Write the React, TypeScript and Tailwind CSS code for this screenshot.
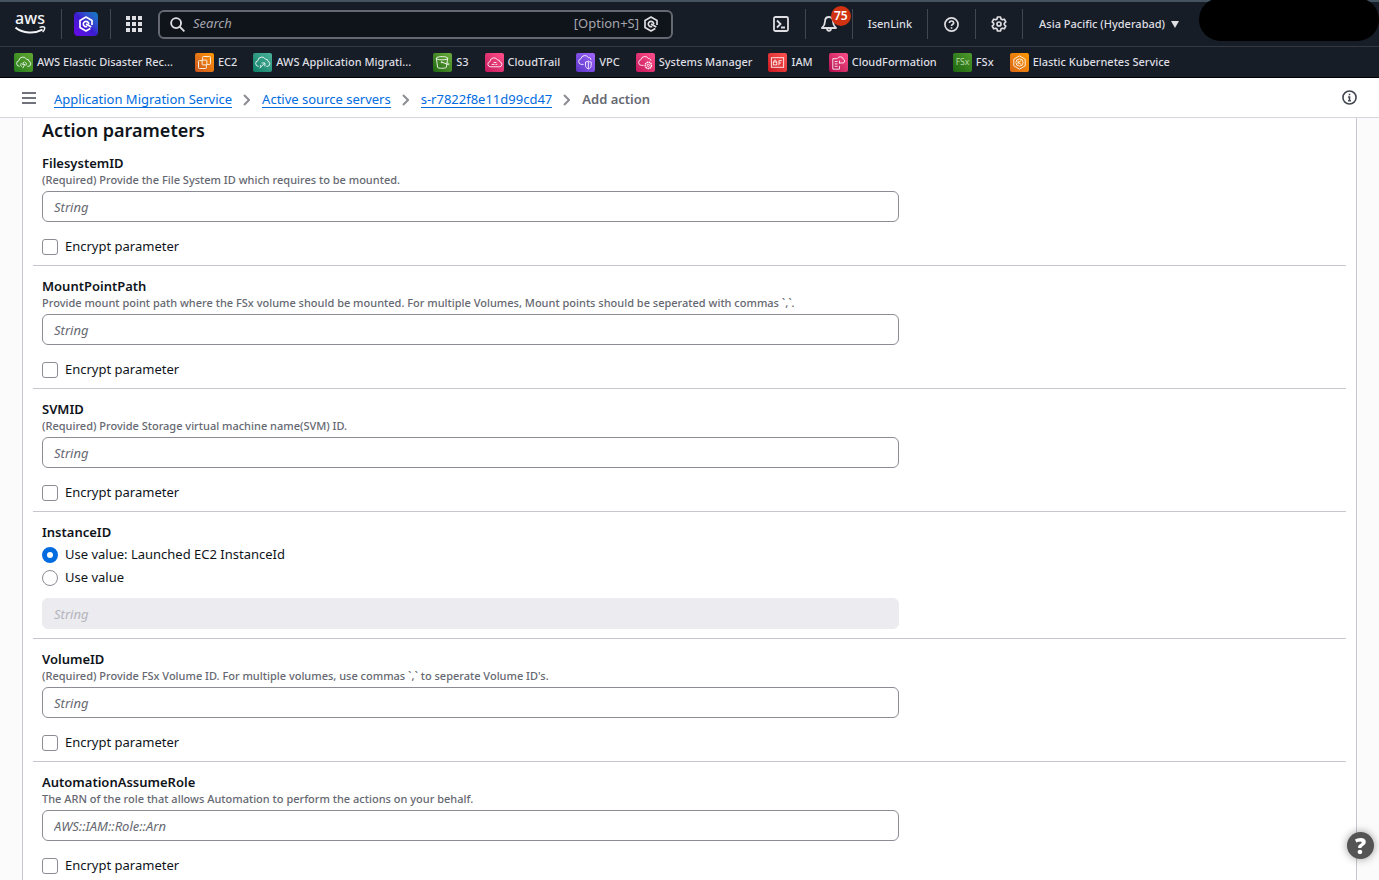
import { useState, type ReactNode } from 'react'

interface Favorite {
  label: string
  color: string
  icon: ReactNode
  shortened?: boolean
}

interface Parameter {
  name: string
  description: string
  placeholder: string
}

const cloud = 'M6 14H5.500a3 3 0 0 1-.4-5.900A4.300 4.300 0 0 1 13.200 6.600a2.300 2.300 0 0 1 2.600 2.200A2.700 2.700 0 0 1 15.500 14H14'

const favorites: Favorite[] = [
  {
    label: 'AWS Elastic Disaster Rec...',
    shortened: true,
    color: 'bg-linear-to-tr from-[#1f7a1a] to-[#62a832]',
    icon: (
      <>
        <path d={cloud} />
        <path d="M10.800 9 9 12h2.400l-2.200 4M8.200 10.300a2.600 2.600 0 0 0-.2 4M12 9.700a2.600 2.600 0 0 1 .4 3.600" />
      </>
    ),
  },
  {
    label: 'EC2',
    color: 'bg-linear-to-tr from-[#c8511b] to-[#ff9900]',
    icon: (
      <>
        <path d="M8 7.500V4.500a.8.8 0 0 1 .8-.8h6.700a.8.8 0 0 1 .8.8v6.700a.8.8 0 0 1-.8.8H12.500" />
        <path d="M7.500 8H4.500a.8.8 0 0 0-.8.8v6.700a.8.8 0 0 0 .8.8h6.700a.8.8 0 0 0 .8-.8V12.500" />
        <rect x="7.500" y="7.500" width="5" height="5" rx=".5" />
      </>
    ),
  },
  {
    label: 'AWS Application Migrati...',
    shortened: true,
    color: 'bg-linear-to-tr from-[#067f68] to-[#4ab29a]',
    icon: (
      <>
        <path d={cloud} />
        <path d="m7 16 5-5M9 10.500h3.500V14M8 12.500v2" />
      </>
    ),
  },
  {
    label: 'S3',
    color: 'bg-linear-to-tr from-[#1b660f] to-[#6cae3e]',
    icon: (
      <>
        <ellipse cx="9.500" cy="5.500" rx="6" ry="1.700" />
        <path d="m3.500 5.500 1.400 9.700c.6 1.200 8.200 1.200 9.100 0l1.500-9.700M9.500 9.800l6.700 2.400c1 .3.7-1-1-1.900" />
        <circle cx="9.200" cy="9.700" r=".6" />
      </>
    ),
  },
  {
    label: 'CloudTrail',
    color: 'bg-linear-to-tr from-[#c4145c] to-[#ff4f8b]',
    icon: (
      <path d="M5.500 14.500h10a2.600 2.600 0 0 0 .3-5.100 2.200 2.200 0 0 0-2.500-2A4.300 4.300 0 0 0 5.200 9a2.800 2.800 0 0 0 .3 5.500ZM7 12h3M11 12h2M9 10h3" />
    ),
  },
  {
    label: 'VPC',
    color: 'bg-linear-to-tr from-[#5b33c4] to-[#a166ff]',
    icon: (
      <>
        <path d="M8 12H5.500a3 3 0 0 1-.4-5.900A4.300 4.300 0 0 1 13 4.800a2.300 2.300 0 0 1 2.700 2.400" />
        <path d="M10 9.500c1.500 0 2-.5 3-1 1 .5 1.500 1 3 1v3.500c0 2-1.200 3-3 3.800-1.800-.8-3-1.800-3-3.800ZM13 9v7.500" />
      </>
    ),
  },
  {
    label: 'Systems Manager',
    color: 'bg-linear-to-tr from-[#c4145c] to-[#ff4f8b]',
    icon: (
      <>
        <path d="M8 13H5.500a3 3 0 0 1-.4-5.900A4.300 4.300 0 0 1 13 5.800a2.300 2.300 0 0 1 2.700 2.400" />
        <circle cx="13" cy="13" r="3.300" strokeDasharray="1.600 .6" strokeWidth="1.500" />
        <circle cx="13" cy="13" r="1.200" />
      </>
    ),
  },
  {
    label: 'IAM',
    color: 'bg-linear-to-tr from-[#c7131f] to-[#ff5252]',
    icon: (
      <>
        <rect x="3.500" y="5" width="13" height="10" />
        <rect x="5.500" y="9.500" width="3.800" height="3" />
        <path d="M6.300 9.500v-1a1.100 1.100 0 0 1 2.200 0v1M11.500 8h3M11.500 10.500h2.200M11.500 8v5" />
      </>
    ),
  },
  {
    label: 'CloudFormation',
    color: 'bg-linear-to-tr from-[#b0084d] to-[#ff4f8b]',
    icon: (
      <>
        <path d="M8.500 6H4v11h7v-3.500M6 9h3M6 11.500h3M6 14h3" />
        <path d="M10.500 10.500h4.200a2.100 2.100 0 0 0 .3-4.100 3.200 3.200 0 0 0-6-.6M11 8v3" />
      </>
    ),
  },
  {
    label: 'FSx',
    color: 'bg-linear-to-tr from-[#1b660f] to-[#4f9a2c]',
    icon: (
      <text x="10" y="13" textAnchor="middle" fontSize="9" fontWeight="400" fill="#b9d9a8" stroke="none">
        FSx
      </text>
    ),
  },
  {
    label: 'Elastic Kubernetes Service',
    color: 'bg-linear-to-tr from-[#d86613] to-[#ff9900]',
    icon: (
      <>
        <path d="m10 3 6 3.500v7L10 17l-6-3.500v-7Z" />
        <circle cx="10" cy="10" r="3.800" />
        <path d="M8.500 8v4M11.800 8l-3 2 3 2" />
      </>
    ),
  },
]

const firstParameters: Parameter[] = [
  {
    name: 'FilesystemID',
    description: '(Required) Provide the File System ID which requires to be mounted.',
    placeholder: 'String',
  },
  {
    name: 'MountPointPath',
    description:
      'Provide mount point path where the FSx volume should be mounted. For multiple Volumes, Mount points should be seperated with commas `,`.',
    placeholder: 'String',
  },
  {
    name: 'SVMID',
    description: '(Required) Provide Storage virtual machine name(SVM) ID.',
    placeholder: 'String',
  },
]

const lastParameters: Parameter[] = [
  {
    name: 'VolumeID',
    description: "(Required) Provide FSx Volume ID. For multiple volumes, use commas `,` to seperate Volume ID's.",
    placeholder: 'String',
  },
  {
    name: 'AutomationAssumeRole',
    description: 'The ARN of the role that allows Automation to perform the actions on your behalf.',
    placeholder: 'AWS::IAM::Role::Arn',
  },
]

function HexIcon({ className }: { className: string }) {
  return (
    <svg className={className} viewBox="0 0 16 16" fill="none" stroke="currentColor" strokeWidth="1.700">
      <path d="M14 9V4.500L8 1 2 4.500v7L8 15l4.300-2.500" strokeLinejoin="round" />
      <path d="M9.200 10.400A2.700 2.700 0 1 1 10.700 8.200M8 7.900l5.300 3.100" />
    </svg>
  )
}

function Separator() {
  return <span className="h-[30px] w-px shrink-0 bg-[#424650]" />
}

function TopBar() {
  return (
    <div className="flex h-[46px] items-center border-t-2 border-[#43535f] text-[#dedee3]">
      <a href="#home" aria-label="AWS home" className="ml-[15px] shrink-0">
        <svg className="h-[38px] w-[31px]" viewBox="0 -8 31 38" fill="none">
          <text x="15" y="11" textAnchor="middle" fontSize="16" fontWeight="500" fill="#f4f4f6">
            aws
          </text>
          <path d="M.5 14.500c7.500 6 19 6.500 27 2.200" stroke="#f4f4f6" strokeWidth="2" />
          <path d="M24.500 14.400c2-.7 4.500-.8 5 0 .4 1-.4 3.200-1.800 4.700" stroke="#f4f4f6" strokeWidth="1.500" />
        </svg>
      </a>
      <div className="ml-[15px] flex shrink-0 items-center">
        <Separator />
        <button
          aria-label="Amazon Q"
          className="mx-3 flex size-6 items-center justify-center rounded bg-linear-to-tr from-[#6a00e8] via-[#3a1bd0] to-[#007fc4] text-white"
        >
          <HexIcon className="size-4" />
        </button>
        <Separator />
      </div>
      <button aria-label="Services" className="mr-4 ml-[15px] shrink-0">
        <svg className="size-4" viewBox="0 0 16 16" fill="currentColor">
          <path d="M0 0h4v4H0zM6 0h4v4H6zM12 0h4v4h-4zM0 6h4v4H0zM6 6h4v4H6zM12 6h4v4h-4zM0 12h4v4H0zM6 12h4v4H6zM12 12h4v4h-4z" />
        </svg>
      </button>
      <label className="flex h-[29px] min-w-0 max-w-[515px] flex-1 items-center rounded-md border-2 border-[#656871] bg-[#0f141a] pr-3 pl-2.5">
        <svg className="size-[15px] shrink-0" viewBox="0 0 16 16" fill="none" stroke="#dedee3" strokeWidth="2">
          <circle cx="6.500" cy="6.500" r="5.300" />
          <path d="m10.300 10.300 5 5" />
        </svg>
        <input
          type="search"
          aria-label="Search"
          placeholder="Search"
          className="ml-2 min-w-0 flex-1 bg-transparent text-[13px] outline-none placeholder:text-[#a4a4ad] placeholder:italic"
        />
        <span className="mr-1 text-[13px] text-[#a4a4ad]">[Option+S]</span>
        <HexIcon className="size-4 shrink-0" />
      </label>
      <div className="ml-auto flex shrink-0 items-center">
        <button aria-label="CloudShell" className="mr-4">
          <svg className="size-4" viewBox="0 0 16 16" fill="none" stroke="currentColor" strokeWidth="1.800">
            <rect x="1" y="1" width="14" height="14" rx="1.500" />
            <path d="m4 4.500 3.500 3.500L4 11.500M8 11.500h4" />
          </svg>
        </button>
        <Separator />
        <button aria-label="Notifications" className="relative mx-[15px]">
          <svg className="size-4" viewBox="0 0 16 16" fill="none" stroke="currentColor" strokeWidth="1.800" strokeLinejoin="round">
            <path d="M8 1C5.500 1 4 3 4 5.500 4 8.500 3 10 1 12h14c-2-2-3-3.500-3-6.500C12 3 10.500 1 8 1ZM6 12.500c0 3 4 3 4 0" />
          </svg>
          <span className="absolute -top-[10px] left-[10px] flex size-[20px] items-center justify-center rounded-full bg-[#d13212] text-[12px] font-semibold text-white">
            75
          </span>
        </button>
        <Separator />
        <a href="#isenlink" className="mx-[15px] text-[11px] font-medium">
          IsenLink
        </a>
        <Separator />
        <button aria-label="Help" className="mx-4">
          <svg className="size-[15px]" viewBox="0 0 16 16" fill="none" stroke="currentColor" strokeWidth="1.800">
            <circle cx="8" cy="8" r="7" />
            <path d="M5.800 6.500C5.800 3.500 10.300 3.600 10.300 6.300 10.300 8 8 7.800 8 9.700M8 10.800v1.800" />
          </svg>
        </button>
        <Separator />
        <button aria-label="Settings" className="mx-[15px]">
          <svg className="size-4" viewBox="0 0 16 16" fill="none" stroke="currentColor" strokeWidth="1.700" strokeLinejoin="round">
            <path d="M6.500 1h3l.5 2 1.300.8 2-.6 1.500 2.600L13.300 7.300v1.400l1.500 1.500-1.500 2.600-2-.6L10 13l-.5 2h-3L6 13l-1.300-.8-2 .6-1.500-2.600L2.700 8.700V7.300L1.200 5.800l1.500-2.600 2 .6L6 3Z" />
            <circle cx="8" cy="8" r="2" />
          </svg>
        </button>
        <Separator />
        <button className="mx-4 flex items-center gap-1.5 text-[11px] font-medium">
          Asia Pacific (Hyderabad)
          <svg className="h-[7px] w-2" viewBox="0 0 8 7" fill="currentColor">
            <path d="M0 0h8L4 7Z" />
          </svg>
        </button>
      </div>
      <div className="-mt-1 ml-1 h-[43px] w-[180px] shrink-0 self-start rounded-full bg-black" />
    </div>
  )
}

function FavoritesBar() {
  return (
    <nav aria-label="Favorites" className="flex h-8 items-center gap-4 overflow-hidden border-t border-b border-t-[#333843] border-b-black px-[14px]">
      {favorites.map((favorite) => (
        <a
          key={favorite.label}
          href={`#${favorite.label}`}
          className={`flex shrink-0 items-center gap-1 text-[11px] font-medium whitespace-nowrap text-[#dedee3] ${favorite.shortened ? 'pr-1.5' : ''}`}
        >
          <svg className={`size-[19px] rounded-xs ${favorite.color}`} viewBox="0 0 20 20" fill="none" stroke="#ffffff" strokeWidth=".9">
            {favorite.icon}
          </svg>
          {favorite.label}
        </a>
      ))}
    </nav>
  )
}

function Crumb({ children }: { children: string }) {
  return (
    <li className="flex items-center gap-[11px]">
      <a href={`#${children}`} className="border-b border-[#006ce0] leading-4 text-[#006ce0]">
        {children}
      </a>
      <svg className="h-3 w-[7px]" viewBox="0 0 7 12" fill="none" stroke="#8c8c94" strokeWidth="2">
        <path d="m1 1 5 5-5 5" />
      </svg>
    </li>
  )
}

function Breadcrumbs() {
  return (
    <div className="flex h-10 items-center border-b border-[#d4d6dd] bg-white px-[22px]">
      <button aria-label="Open navigation" className="text-[#424650]">
        <svg className="h-3 w-[14px]" viewBox="0 0 14 12" fill="none" stroke="currentColor" strokeWidth="1.700">
          <path d="M0 1h14M0 6h14M0 11h14" />
        </svg>
      </button>
      <ol className="mt-1 ml-[18px] flex items-center gap-3 text-[13px]">
        <Crumb>Application Migration Service</Crumb>
        <Crumb>Active source servers</Crumb>
        <Crumb>s-r7822f8e11d99cd47</Crumb>
        <li className="font-semibold text-[#656871]">Add action</li>
      </ol>
      <button aria-label="Info" className="ml-auto text-[#424650]">
        <svg className="size-[15px]" viewBox="0 0 16 16" fill="none" stroke="currentColor" strokeWidth="1.700">
          <circle cx="8" cy="8" r="7" />
          <path d="M8 4v1.700M6.500 7.500H8v4M6.500 11.500h3" />
        </svg>
      </button>
    </div>
  )
}

function StringInput({ id, placeholder, disabled }: { id: string; placeholder: string; disabled?: boolean }) {
  return (
    <input
      id={id}
      type="text"
      disabled={disabled}
      placeholder={placeholder}
      className="block h-[31px] w-2/3 rounded-md border border-[#8c8c94] bg-white px-[11px] text-[13px] text-[#0f141a] placeholder:text-[#656871] placeholder:italic disabled:border-[#ebebf0] disabled:bg-[#ebebf0] disabled:placeholder:text-[#b4b4bb]"
    />
  )
}

function ParameterField({ name, description, placeholder }: Parameter) {
  return (
    <div className="border-b border-[#c6c6cd] pt-[11px] pr-[18px] pb-2 pl-[9px]">
      <label htmlFor={name} className="block text-[13px] leading-[18px] font-semibold">
        {name}
      </label>
      <p className="mb-[3px] text-[11px] leading-4 font-medium text-[#656871]">{description}</p>
      <StringInput id={name} placeholder={placeholder} />
      <label className="mt-[15px] flex h-5 items-center gap-[7px] text-[13px]">
        <input type="checkbox" className="size-4 appearance-none rounded-[3px] border border-[#8c8c94] checked:bg-[#006ce0]" />
        Encrypt parameter
      </label>
    </div>
  )
}

function InstanceField() {
  const [source, setSource] = useState('launched')

  const options = [
    { value: 'launched', label: 'Use value: Launched EC2 InstanceId' },
    { value: 'custom', label: 'Use value' },
  ]

  return (
    <fieldset className="border-b border-[#c6c6cd] pt-[11px] pr-[18px] pb-[9px] pl-[9px]">
      <label htmlFor="InstanceID" className="block text-[13px] leading-[18px] font-semibold">
        InstanceID
      </label>
      <div className="mt-1 mb-[10px] flex flex-col gap-[3px]">
        {options.map((option) => (
          <label key={option.value} className="flex h-5 items-center gap-[7px] text-[13px]">
            <input
              type="radio"
              name="instance-source"
              checked={source === option.value}
              onChange={() => setSource(option.value)}
              className="size-4 appearance-none rounded-full border border-[#8c8c94] bg-white checked:border-[5px] checked:border-[#006ce0]"
            />
            {option.label}
          </label>
        ))}
      </div>
      <StringInput id="InstanceID" placeholder="String" disabled={source === 'launched'} />
    </fieldset>
  )
}

export default function App() {
  return (
    <div className="flex h-screen flex-col overflow-hidden bg-[#fbfbfc] font-['Noto_Sans','Open_Sans',sans-serif] text-[#0f141a]">
      <header className="shrink-0 bg-[#161d26]">
        <TopBar />
        <FavoritesBar />
        <Breadcrumbs />
      </header>
      <main className="min-h-0 flex-1 overflow-hidden px-[22px]">
        <form className="border-x border-[#c6c6cd] bg-white px-[10px]">
          <h2 className="pl-[9px] text-[18px] leading-[25px] font-semibold">Action parameters</h2>
          {firstParameters.map((parameter) => (
            <ParameterField key={parameter.name} {...parameter} />
          ))}
          <InstanceField />
          {lastParameters.map((parameter) => (
            <ParameterField key={parameter.name} {...parameter} />
          ))}
        </form>
      </main>
      <button
        aria-label="Support"
        className="fixed right-[5px] bottom-[21px] flex size-[27px] items-center justify-center rounded-full bg-[#545454] text-[22px] font-black text-white shadow-[0_0_8px_rgba(0,0,0,0.4)]"
      >
        ?
      </button>
    </div>
  )
}
